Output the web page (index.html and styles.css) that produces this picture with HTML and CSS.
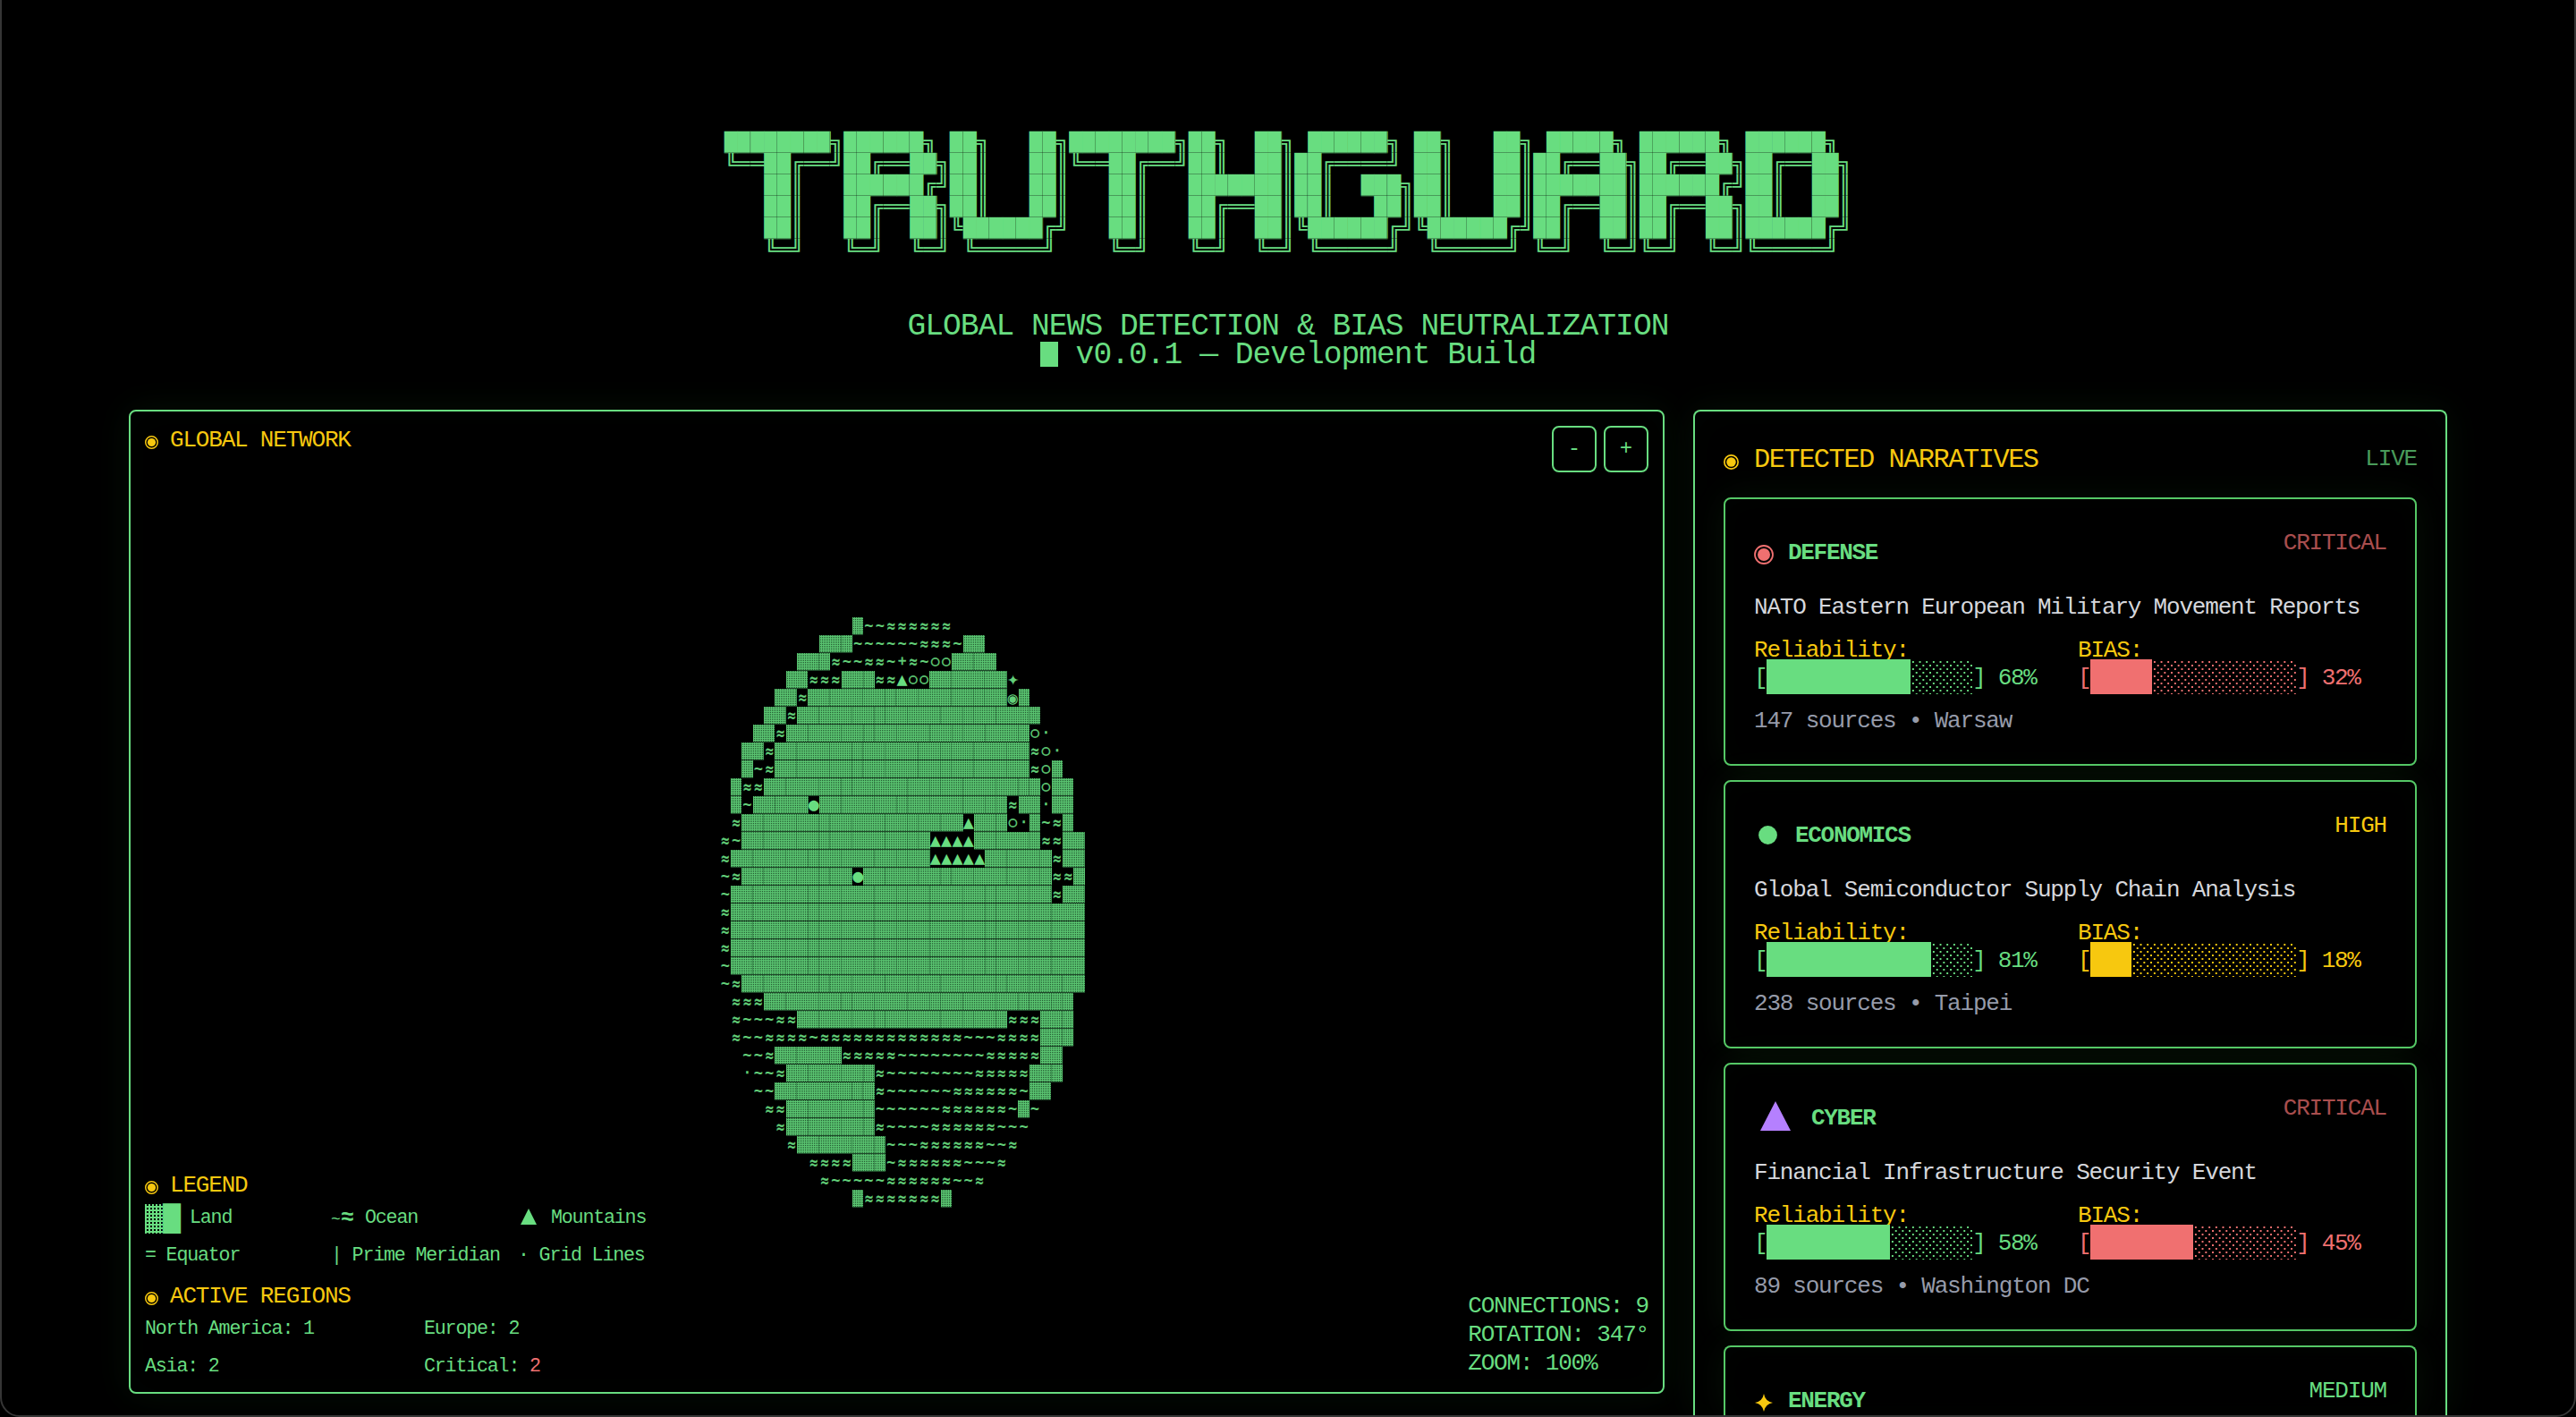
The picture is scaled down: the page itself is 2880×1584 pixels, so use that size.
FILE: index.html
```html
<!DOCTYPE html>
<html lang="en">
<head>
<meta charset="utf-8">
<title>TruthGuard</title>
<link rel="stylesheet" href="styles.css">
</head>
<body>
<main class="page">
<header class="masthead">
<pre class="banner">████████╗██████╗ ██╗   ██╗████████╗██╗  ██╗ ██████╗ ██╗   ██╗ █████╗ ██████╗ ██████╗ 
╚══██╔══╝██╔══██╗██║   ██║╚══██╔══╝██║  ██║██╔════╝ ██║   ██║██╔══██╗██╔══██╗██╔══██╗
   ██║   ██████╔╝██║   ██║   ██║   ███████║██║  ███╗██║   ██║███████║██████╔╝██║  ██║
   ██║   ██╔══██╗██║   ██║   ██║   ██╔══██║██║   ██║██║   ██║██╔══██║██╔══██╗██║  ██║
   ██║   ██║  ██║╚██████╔╝   ██║   ██║  ██║╚██████╔╝╚██████╔╝██║  ██║██║  ██║██████╔╝
   ╚═╝   ╚═╝  ╚═╝ ╚═════╝    ╚═╝   ╚═╝  ╚═╝ ╚═════╝  ╚═════╝ ╚═╝  ╚═╝╚═╝  ╚═╝╚═════╝ </pre>
<p class="tagline">GLOBAL NEWS DETECTION &amp; BIAS NEUTRALIZATION</p>
<p class="tagline"><span class="cursor"></span> v0.0.1 — Development Build</p>
</header>
<div class="columns">
<section class="panel network">
  <div class="network-top">
    <h2 class="heading"><svg class="ring" viewBox="0 0 16 16"><circle cx="8" cy="8" r="7.2"/><circle class="dot" cx="8" cy="8" r="4.9"/></svg>GLOBAL NETWORK</h2>
    <div class="zoom"><button class="zoom-btn">-</button><button class="zoom-btn">+</button></div>
  </div>
  <div class="globe" id="globe"></div>
  <div class="network-bottom">
    <div class="info">
      <h2 class="heading"><svg class="ring" viewBox="0 0 16 16"><circle cx="8" cy="8" r="7.2"/><circle class="dot" cx="8" cy="8" r="4.9"/></svg>LEGEND</h2>
      <div class="legend">
        <span class="key"><span class="swatch"><span class="shade swatch-dither">▓</span><span class="shade">█</span></span>Land</span>
        <span class="key"><span class="wave"><small>~</small>≈</span>Ocean</span>
        <span class="key"><svg class="peak" viewBox="0 0 18 18"><path d="M9 0L18 18H0Z"/></svg>Mountains</span>
        <span class="key">= Equator</span>
        <span class="key">| Prime Meridian</span>
        <span class="key">· Grid Lines</span>
      </div>
      <h2 class="heading regions-title"><svg class="ring" viewBox="0 0 16 16"><circle cx="8" cy="8" r="7.2"/><circle class="dot" cx="8" cy="8" r="4.9"/></svg>ACTIVE REGIONS</h2>
      <div class="regions">
        <span>North America: 1</span><span>Europe: 2</span>
        <span>Asia: 2</span><span>Critical: <b class="alert">2</b></span>
      </div>
    </div>
    <div class="stats"><div>CONNECTIONS: 9</div><div>ROTATION: 347°</div><div>ZOOM: 100%</div></div>
  </div>
</section>
<section class="panel feed">
  <div class="feed-head">
    <h2 class="heading large"><svg class="ring" viewBox="0 0 16 16"><circle cx="8" cy="8" r="7.2"/><circle class="dot" cx="8" cy="8" r="4.9"/></svg>DETECTED NARRATIVES</h2>
    <span class="live">LIVE</span>
  </div>
  <article class="card">
    <div class="card-head">
      <h3 class="topic"><svg class="icon icon-ring" viewBox="0 0 22 22"><circle cx="11" cy="11" r="10"/><circle class="dot" cx="11" cy="11" r="7"/></svg>DEFENSE</h3>
      <span class="level critical">CRITICAL</span>
    </div>
    <p class="title">NATO Eastern European Military Movement Reports</p>
    <div class="meters">
      <div class="meter"><span class="label">Reliability:</span><div class="bar">[<span class="track"><span class="fill">███████</span><span class="rest">░░░</span></span>] 68%</div></div>
      <div class="meter"><span class="label">BIAS:</span><div class="bar red">[<span class="track"><span class="fill">███</span><span class="rest">░░░░░░░</span></span>] 32%</div></div>
    </div>
    <p class="source">147 sources • Warsaw</p>
  </article>
  <article class="card">
    <div class="card-head">
      <h3 class="topic"><svg class="icon icon-disc" viewBox="0 0 21 21"><circle cx="10.5" cy="10.5" r="10.4"/></svg>ECONOMICS</h3>
      <span class="level high">HIGH</span>
    </div>
    <p class="title">Global Semiconductor Supply Chain Analysis</p>
    <div class="meters">
      <div class="meter"><span class="label">Reliability:</span><div class="bar">[<span class="track"><span class="fill">████████</span><span class="rest">░░</span></span>] 81%</div></div>
      <div class="meter"><span class="label">BIAS:</span><div class="bar yellow">[<span class="track"><span class="fill">██</span><span class="rest">░░░░░░░░</span></span>] 18%</div></div>
    </div>
    <p class="source">238 sources • Taipei</p>
  </article>
  <article class="card">
    <div class="card-head">
      <h3 class="topic"><svg class="icon icon-peak" viewBox="0 0 34 33"><path d="M17 0L34 33H0Z"/></svg>CYBER</h3>
      <span class="level critical">CRITICAL</span>
    </div>
    <p class="title">Financial Infrastructure Security Event</p>
    <div class="meters">
      <div class="meter"><span class="label">Reliability:</span><div class="bar">[<span class="track"><span class="fill">██████</span><span class="rest">░░░░</span></span>] 58%</div></div>
      <div class="meter"><span class="label">BIAS:</span><div class="bar red">[<span class="track"><span class="fill">█████</span><span class="rest">░░░░░</span></span>] 45%</div></div>
    </div>
    <p class="source">89 sources • Washington DC</p>
  </article>
  <article class="card card-last">
    <div class="card-head">
      <h3 class="topic"><svg class="icon icon-star" viewBox="0 0 20 20"><path d="M10 0Q11.5 8.5 20 10Q11.5 11.5 10 20Q8.5 11.5 0 10Q8.5 8.5 10 0Z"/></svg>ENERGY</h3>
      <span class="level medium">MEDIUM</span>
    </div>
  </article>
</section>
</div>
</main>
<div class="frame"></div>
<script src="globe.js"></script>
</body>
</html>
```
FILE: globe.js
```js
// Each row is a list of runs: a count followed by a cell code.
// _ empty, # land, ~ shallow water, = deep water, A mountain, o grid ring,
// O city, @ hub, * spark, + cross, . grid point
const ROWS = [
  "12_ 1# 2~ 6=",
  "9_ 3# 6~ 3= 1~ 2#",
  "7_ 3# 1= 2~ 2= 1~ 1+ 1= 1~ 2o 4#",
  "6_ 2# 3= 3# 2= 1A 2o 7# 1*",
  "5_ 2# 1= 18# 1@ 1#",
  "4_ 2# 1= 22#",
  "3_ 2# 1= 22# 1o 1.",
  "2_ 2# 1= 23# 1= 1o 1.",
  "2_ 1# 1~ 1= 23# 1= 1o 1#",
  "1_ 1# 2= 25# 1o 2#",
  "1_ 1# 1~ 5# 1O 17# 1= 2# 1. 2#",
  "1_ 1= 20# 1A 3# 1o 1. 1# 1~ 1= 1#",
  "1= 1~ 17# 4A 6# 2= 2#",
  "1= 18# 5A 6# 1= 2#",
  "1~ 1= 10# 1O 17# 2= 1#",
  "1~ 29# 1= 2#",
  "1= 32#",
  "1= 32#",
  "1= 32#",
  "1~ 32#",
  "1~ 1= 31#",
  "1_ 3= 28#",
  "1_ 1= 3~ 2= 19# 3= 3#",
  "1_ 1= 2~ 4= 1~ 13= 3~ 4= 3#",
  "2_ 2~ 1= 6# 5= 8~ 5= 2#",
  "2_ 1. 2~ 1= 8# 1= 8~ 5= 3#",
  "3_ 2~ 9# 1= 6~ 6= 1~ 2#",
  "4_ 2= 8# 6~ 6= 1~ 1# 1~",
  "5_ 1= 8# 1= 4~ 6= 3~",
  "6_ 1= 8# 3~ 6= 2~ 1=",
  "8_ 4= 3# 1~ 6= 3~ 1=",
  "9_ 1= 5~ 6= 2~ 1=",
  "12_ 1# 7= 1#"
];
const CELL = 12.37;
const GLYPHS = { _: " ", "#": "▓", "~": "~", "=": "≈", A: "▲", o: "○", O: "●", "@": "◉", "*": "✦", "+": "+", ".": "·" };
const NAMES = { _: "void", "#": "land", "~": "ripple", "=": "wave-cell", A: "mount", o: "mark", O: "city", "@": "hub", "*": "spark", "+": "mark", ".": "mark" };

const globe = document.getElementById("globe");
for (const row of ROWS) {
  const line = document.createElement("div");
  line.className = "globe-row";
  for (const run of row.split(" ")) {
    const code = run.slice(-1);
    const count = parseInt(run, 10);
    // Land is one dithered run; everything else is placed cell by cell.
    const pieces = code === "#" ? 1 : count;
    for (let i = 0; i < pieces; i++) {
      const cell = document.createElement("span");
      cell.className = "cell " + NAMES[code];
      cell.textContent = GLYPHS[code].repeat(count / pieces);
      cell.style.width = (count / pieces) * CELL + "px";
      line.append(cell);
    }
  }
  globe.append(line);
}
```
FILE: styles.css
```css
:root {
  --green: #68dd80;
  --yellow: #f7c80f;
  --red: #f07070;
}
* { box-sizing: border-box; margin: 0; padding: 0; }
html { background: #000; height: 100%; overflow: hidden; }
body {
  height: 1584px;
  overflow: hidden;
  background: #000;
  color: var(--green);
  font: 26px/32px "Liberation Mono", "DejaVu Sans Mono", monospace;
  letter-spacing: -0.046em;
}
.page { height: 1584px; overflow: hidden; padding: 147px 144px 0; }
.frame {
  position: absolute; inset: -30px 0 0;
  border: 2px solid #363636;
  border-radius: 22px;
  pointer-events: none;
}
.masthead { display: flex; flex-direction: column; align-items: center; height: 311px; }
.banner {
  position: relative;
  height: 144px;
  margin-bottom: 58px;
  font: 20.6px/24px "DejaVu Sans Mono", monospace;
  letter-spacing: 0;
  transform: scaleX(1.196);
}
.banner::after {
  content: "";
  position: absolute; inset: 0 0 24px;
  background:
    repeating-linear-gradient(rgba(0,0,0,0) 0 23px, rgba(0,0,0,.3) 23px 24px),
    repeating-linear-gradient(90deg, rgba(0,0,0,0) 0 24px, rgba(0,0,0,.25) 24px 24.8px);
}
.tagline { font-size: 34.6px; line-height: 32px; letter-spacing: -0.96px; white-space: pre; }
.cursor { display: inline-block; width: 20px; height: 28px; background: var(--green); vertical-align: -4px; }

.columns { display: grid; grid-template-columns: 1717px 843px; gap: 32px; }
.panel {
  border: 2px solid var(--green);
  border-radius: 8px;
  box-shadow: 0 0 40px rgba(74, 222, 80, .07), inset 0 0 40px rgba(74, 222, 80, .02);
}
.heading { display: flex; align-items: center; color: var(--yellow); font-size: 26px; font-weight: 400; line-height: 32px; }
.ring { width: 15px; height: 15px; margin: 4px 13px 0 0; fill: none; stroke: currentColor; stroke-width: 1.6; }
.dot { fill: currentColor; stroke: none; }

.network { display: flex; flex-direction: column; height: 1100px; padding: 16px; }
.network-top { display: flex; justify-content: space-between; align-items: flex-start; height: 214px; flex: none; }
.zoom { display: flex; gap: 8px; }
.zoom-btn {
  width: 50px; height: 52px;
  border: 2px solid var(--green); border-radius: 8px;
  background: none; color: inherit;
  font: 24px/30px "Liberation Mono", monospace;
}
.globe { height: 660px; flex: none; margin-left: 642.6px; line-height: 20px; letter-spacing: 0; }
.globe-row { display: flex; height: 20px; }
.cell { flex: none; height: 20px; text-align: center; white-space: pre; font: 18px/20px "DejaVu Sans Mono", monospace; color: #62cf79; }
.land {
  overflow: hidden;
  font-size: 17.2px;
  letter-spacing: 2.01px;
  color: transparent;
  background:
    linear-gradient(transparent 19px, #1f4a2a 19px) 0 0 / 100% 20px,
    repeating-linear-gradient(90deg, transparent 0 11.87px, rgba(20,70,35,.35) 11.87px 12.37px),
    conic-gradient(#22572f 25%, transparent 0) 0 0 / 2px 2px,
    #5ac571;
}
.ripple { font-size: 17px; font-weight: 700; line-height: 18px; }
.wave-cell { font-size: 15px; line-height: 21px; transform: scaleY(1.45); -webkit-text-stroke: .3px #62cf79; }
.mark { font-size: 15.5px; line-height: 18px; -webkit-text-stroke: .5px #62cf79; }
.hub { font-size: 19px; }
.spark { font-size: 22px; line-height: 18px; }
.mount, .city { color: var(--green); font-size: 20px; line-height: 18px; }

.network-bottom { display: flex; justify-content: space-between; align-items: flex-end; height: 250px; margin-top: -60px; flex: none; }
.info { font-size: 21.67px; line-height: 42px; height: 231px; }
.legend { display: grid; grid-template-columns: 208px 209px auto; grid-auto-rows: 42px; }
.key { display: flex; align-items: center; white-space: pre; }
.swatch { display: flex; width: 50px; height: 33px; line-height: 33px; letter-spacing: 0; }
.shade { display: inline-block; font-family: "DejaVu Sans Mono", monospace; transform-origin: 0 50%; letter-spacing: 0; }
.swatch .shade { width: 19.6px; font-size: 28.4px; transform: scaleX(1.147); }
.swatch .swatch-dither {
  overflow: hidden; height: 33px; color: transparent; transform: none;
  background: conic-gradient(#000 25%, transparent 0) 0 0 / 4px 4px, var(--green);
}
.wave { display: flex; align-items: center; width: 38px; font-weight: 700; font-size: 25px; line-height: 30px; }
.wave small { width: 11px; font-size: 18px; font-weight: 400; padding-top: 2px; }
.peak { width: 18px; height: 18px; margin: 0 16px 4px 3px; fill: currentColor; }
.regions-title { margin-top: 8px; }
.regions { display: grid; grid-template-columns: 312px auto; grid-auto-rows: 42px; }
.alert { color: var(--red); font-weight: 400; }
.stats { line-height: 32px; }

.feed { height: 1124px; overflow: hidden; padding: 32px 32px 0; border-bottom: 0; border-radius: 8px 8px 0 0; }
.feed-head { display: flex; justify-content: space-between; height: 64px; }
.large { font-size: 30.33px; height: 44px; letter-spacing: -0.049em; }
.large .ring { width: 17px; height: 17px; margin-right: 17px; }
.live { opacity: .7; line-height: 42px; }
.card {
  height: 300px;
  margin-bottom: 16px;
  padding: 32px;
  border: 2px solid #55c866;
  border-radius: 8px;
  box-shadow: 0 0 40px rgba(74, 222, 80, .08), inset 0 0 30px rgba(74, 222, 80, .02);
}
.card-last { height: 78px; margin: 0; padding-bottom: 0; border-bottom: 0; border-radius: 8px 8px 0 0; }
.card-head { display: flex; justify-content: space-between; height: 64px; }
.card-last .card-head { height: 44px; }
.topic { display: flex; align-items: center; height: 56px; font-size: 26px; font-weight: 700; letter-spacing: -0.05em; }
.icon { fill: currentColor; }
.icon-ring { width: 22px; height: 22px; margin: 4px 16px 0 0; color: var(--red); fill: none; stroke: currentColor; stroke-width: 1.8; }
.icon-disc { width: 21px; height: 21px; margin: 0 20px 2px 5px; }
.icon-peak { width: 34px; height: 33px; margin: 0 23px 6px 7px; color: #b580ff; }
.icon-star { width: 20px; height: 20px; margin: 4px 17px 0 1px; color: var(--yellow); }
.level { line-height: 34px; }
.critical { color: var(--red); opacity: .7; }
.high { color: var(--yellow); }
.title { height: 56px; line-height: 50px; color: #d5d7dc; }
.meters { display: grid; grid-template-columns: 362px auto; height: 72px; }
.label { display: block; height: 30px; color: var(--yellow); line-height: 34px; }
.bar { display: flex; height: 32px; line-height: 37px; white-space: pre; letter-spacing: -0.052em; }
.red { color: var(--red); }
.yellow { color: var(--yellow); }
.track {
  display: flex; width: 230px; height: 39px; margin: -3px 0 0;
  font: 33.6px/39px "DejaVu Sans Mono", monospace;
  letter-spacing: 2.77px;
}
.fill { overflow: hidden; background: currentColor; }
.rest {
  flex: 1;
  overflow: hidden;
  -webkit-text-fill-color: transparent;
  background:
    conic-gradient(from 90deg at 5.6px 6px, currentColor 25%, transparent 0) 0 0 / 7.67px 8px,
    conic-gradient(from 90deg at 5.6px 6px, currentColor 25%, transparent 0) 3.83px 4px / 7.67px 8px;
}
.source { line-height: 48px; color: #969baa; }
```
